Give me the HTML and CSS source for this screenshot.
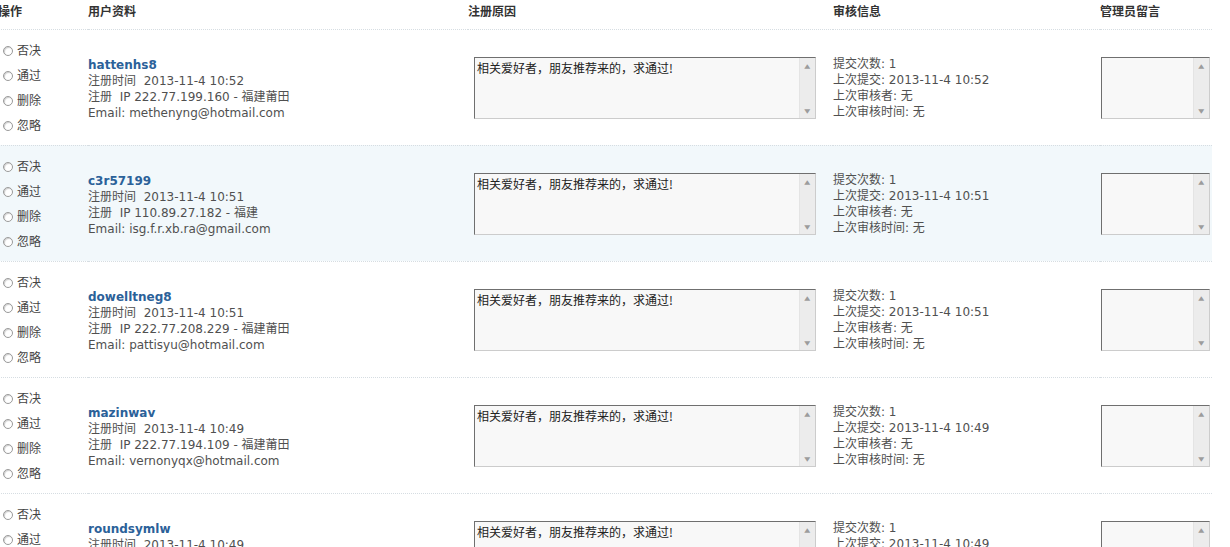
FILE: index.html
```html
<!DOCTYPE html>
<html lang="zh-CN">

<head>
    <meta charset="utf-8">
    <title>用户审核</title>
    <link rel="stylesheet" href="styles.css">
</head>

<body>
    <table class="audit">
        <colgroup>
            <col class="c-op">
            <col class="c-user">
            <col class="c-reason">
            <col class="c-info">
            <col class="c-note">
        </colgroup>
        <thead>
            <tr>
                <th>操作</th>
                <th>用户资料</th>
                <th>注册原因</th>
                <th>审核信息</th>
                <th>管理员留言</th>
            </tr>
        </thead>
        <tbody>
            <tr>
                <td>
                    <ul class="ops">
                        <li><label><input type="radio" name="m1">否决</label></li>
                        <li><label><input type="radio" name="m1">通过</label></li>
                        <li><label><input type="radio" name="m1">删除</label></li>
                        <li><label><input type="radio" name="m1">忽略</label></li>
                    </ul>
                </td>
                <td class="user">
                    <a class="uname" href="#">hattenhs8</a>
                    <p>注册时间&nbsp;&nbsp;2013-11-4 10:52</p>
                    <p>注册&nbsp;&nbsp;IP 222.77.199.160 - 福建莆田</p>
                    <p>Email: methenyng@hotmail.com</p>
                </td>
                <td>
                    <div class="memo memo-wide"><textarea readonly>相关爱好者，朋友推荐来的，求通过!</textarea><span class="sbar"><i>▲</i><i>▼</i></span></div>
                </td>
                <td>
                    <p>提交次数: 1</p>
                    <p>上次提交: 2013-11-4 10:52</p>
                    <p>上次审核者: 无</p>
                    <p>上次审核时间: 无</p>
                </td>
                <td>
                    <div class="memo memo-small"><textarea></textarea><span class="sbar"><i>▲</i><i>▼</i></span></div>
                </td>
            </tr>
            <tr class="hover">
                <td>
                    <ul class="ops">
                        <li><label><input type="radio" name="m2">否决</label></li>
                        <li><label><input type="radio" name="m2">通过</label></li>
                        <li><label><input type="radio" name="m2">删除</label></li>
                        <li><label><input type="radio" name="m2">忽略</label></li>
                    </ul>
                </td>
                <td class="user">
                    <a class="uname" href="#">c3r57199</a>
                    <p>注册时间&nbsp;&nbsp;2013-11-4 10:51</p>
                    <p>注册&nbsp;&nbsp;IP 110.89.27.182 - 福建</p>
                    <p>Email: isg.f.r.xb.ra@gmail.com</p>
                </td>
                <td>
                    <div class="memo memo-wide"><textarea readonly>相关爱好者，朋友推荐来的，求通过!</textarea><span class="sbar"><i>▲</i><i>▼</i></span></div>
                </td>
                <td>
                    <p>提交次数: 1</p>
                    <p>上次提交: 2013-11-4 10:51</p>
                    <p>上次审核者: 无</p>
                    <p>上次审核时间: 无</p>
                </td>
                <td>
                    <div class="memo memo-small"><textarea></textarea><span class="sbar"><i>▲</i><i>▼</i></span></div>
                </td>
            </tr>
            <tr>
                <td>
                    <ul class="ops">
                        <li><label><input type="radio" name="m3">否决</label></li>
                        <li><label><input type="radio" name="m3">通过</label></li>
                        <li><label><input type="radio" name="m3">删除</label></li>
                        <li><label><input type="radio" name="m3">忽略</label></li>
                    </ul>
                </td>
                <td class="user">
                    <a class="uname" href="#">dowelltneg8</a>
                    <p>注册时间&nbsp;&nbsp;2013-11-4 10:51</p>
                    <p>注册&nbsp;&nbsp;IP 222.77.208.229 - 福建莆田</p>
                    <p>Email: pattisyu@hotmail.com</p>
                </td>
                <td>
                    <div class="memo memo-wide"><textarea readonly>相关爱好者，朋友推荐来的，求通过!</textarea><span class="sbar"><i>▲</i><i>▼</i></span></div>
                </td>
                <td>
                    <p>提交次数: 1</p>
                    <p>上次提交: 2013-11-4 10:51</p>
                    <p>上次审核者: 无</p>
                    <p>上次审核时间: 无</p>
                </td>
                <td>
                    <div class="memo memo-small"><textarea></textarea><span class="sbar"><i>▲</i><i>▼</i></span></div>
                </td>
            </tr>
            <tr>
                <td>
                    <ul class="ops">
                        <li><label><input type="radio" name="m4">否决</label></li>
                        <li><label><input type="radio" name="m4">通过</label></li>
                        <li><label><input type="radio" name="m4">删除</label></li>
                        <li><label><input type="radio" name="m4">忽略</label></li>
                    </ul>
                </td>
                <td class="user">
                    <a class="uname" href="#">mazinwav</a>
                    <p>注册时间&nbsp;&nbsp;2013-11-4 10:49</p>
                    <p>注册&nbsp;&nbsp;IP 222.77.194.109 - 福建莆田</p>
                    <p>Email: vernonyqx@hotmail.com</p>
                </td>
                <td>
                    <div class="memo memo-wide"><textarea readonly>相关爱好者，朋友推荐来的，求通过!</textarea><span class="sbar"><i>▲</i><i>▼</i></span></div>
                </td>
                <td>
                    <p>提交次数: 1</p>
                    <p>上次提交: 2013-11-4 10:49</p>
                    <p>上次审核者: 无</p>
                    <p>上次审核时间: 无</p>
                </td>
                <td>
                    <div class="memo memo-small"><textarea></textarea><span class="sbar"><i>▲</i><i>▼</i></span></div>
                </td>
            </tr>
            <tr>
                <td>
                    <ul class="ops">
                        <li><label><input type="radio" name="m5">否决</label></li>
                        <li><label><input type="radio" name="m5">通过</label></li>
                        <li><label><input type="radio" name="m5">删除</label></li>
                        <li><label><input type="radio" name="m5">忽略</label></li>
                    </ul>
                </td>
                <td class="user">
                    <a class="uname" href="#">roundsymlw</a>
                    <p>注册时间&nbsp;&nbsp;2013-11-4 10:49</p>
                    <p>注册&nbsp;&nbsp;IP 222.77.193.52 - 福建莆田</p>
                    <p>Email: roundsymlw@hotmail.com</p>
                </td>
                <td>
                    <div class="memo memo-wide"><textarea readonly>相关爱好者，朋友推荐来的，求通过!</textarea><span class="sbar"><i>▲</i><i>▼</i></span></div>
                </td>
                <td>
                    <p>提交次数: 1</p>
                    <p>上次提交: 2013-11-4 10:49</p>
                    <p>上次审核者: 无</p>
                    <p>上次审核时间: 无</p>
                </td>
                <td>
                    <div class="memo memo-small"><textarea></textarea><span class="sbar"><i>▲</i><i>▼</i></span></div>
                </td>
            </tr>
        </tbody>
    </table>
</body>

</html>
```

FILE: styles.css
```css
html {
    overflow: hidden;
}

body {
    margin: 0;
    background: #fff;
    font-family: "DejaVu Sans", "Noto Sans CJK SC", sans-serif;
    font-size: 12px;
    line-height: 16px;
    color: #505050;
}

.audit {
    border-collapse: collapse;
    table-layout: fixed;
    width: 1214px;
    margin-left: -2px;
}

.c-op { width: 90px; }
.c-user { width: 380px; }
.c-reason { width: 365px; }
.c-info { width: 267px; }
.c-note { width: 112px; }

.audit th {
    height: 29px;
    box-sizing: border-box;
    padding: 4px 0 0;
    text-align: left;
    vertical-align: top;
    font-weight: bold;
    color: #333;
    border-bottom: 1px dotted #d6dde2;
}

.audit td {
    height: 116px;
    box-sizing: border-box;
    padding: 2px 0 0;
    vertical-align: middle;
    border-bottom: 1px dotted #d6dde2;
}

.audit td.user {
    padding-top: 4px;
}

.audit tr.hover td {
    background: #f2f8fb;
}

.audit p {
    margin: 0;
}

.uname {
    display: block;
    font-weight: bold;
    color: #2b6199;
    text-decoration: none;
}

/* radio list */
.ops {
    list-style: none;
    margin: 0;
    padding: 0 0 0 5px;
}

.ops li {
    height: 25px;
    display: flex;
    align-items: center;
}

.ops label {
    display: flex;
    align-items: center;
    gap: 4px;
    color: #444;
}

.ops input {
    appearance: none;
    -webkit-appearance: none;
    margin: 0;
    width: 10px;
    height: 10px;
    border: 1px solid #9a9a9a;
    border-radius: 50%;
    background: #fff;
    box-shadow: inset 1px 1px 1px #cfcfcf;
}

/* textarea with old style scrollbar */
.memo {
    display: flex;
    height: 62px;
    box-sizing: border-box;
    border: 1px solid #ccc;
    border-top-color: #6f6f6f;
    border-left-color: #6f6f6f;
    background: #f8f8f8;
}

.memo-wide {
    width: 342px;
    margin-left: 6px;
}

.memo-small {
    width: 109px;
    margin-left: 1px;
}

.memo textarea {
    flex: 1;
    min-width: 0;
    border: none;
    outline: none;
    resize: none;
    background: transparent;
    padding: 2px 2px;
    margin: 0;
    overflow: hidden;
    font-family: "Noto Sans CJK SC", "DejaVu Sans", sans-serif;
    font-size: 12px;
    line-height: 16px;
    color: #222;
}

.sbar {
    width: 16px;
    flex: none;
    background: #ececec;
    border-left: 1px solid #e4e4e4;
    display: flex;
    flex-direction: column;
    justify-content: space-between;
    align-items: center;
    padding: 5px 0 4px;
    box-sizing: border-box;
}

.sbar i {
    font-style: normal;
    font-size: 6px;
    line-height: 6px;
    color: #9c9c9c;
    transform: scaleX(1.3);
}
```
